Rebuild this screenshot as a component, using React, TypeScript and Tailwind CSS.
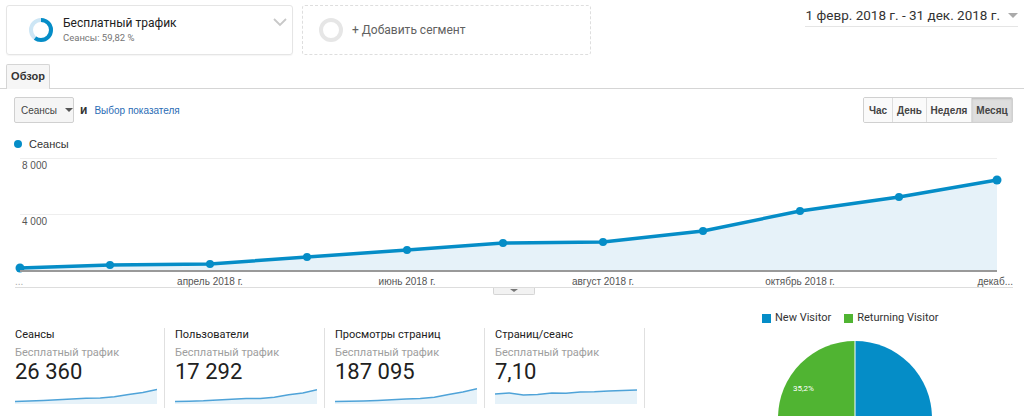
import React from 'react'

const pts: [number, number][] = [
  [20, 116], [110, 113], [210, 112], [307, 105], [407, 98], [503, 91],
  [603, 90], [703, 79], [800, 59], [899, 45], [997, 28],
]

const axisLabels = [
  { x: 210, t: 'апрель 2018 г.' },
  { x: 407, t: 'июнь 2018 г.' },
  { x: 603, t: 'август 2018 г.' },
  { x: 800, t: 'октябрь 2018 г.' },
]

function MainChart() {
  const line = pts.map(p => p.join(',')).join(' ')
  const area = `20,118 ${line} 997,118`
  return (
    <svg width="1024" height="136" className="block">
      <line x1="20" y1="6.5" x2="997" y2="6.5" stroke="#eeeeee" />
      <line x1="20" y1="62.5" x2="997" y2="62.5" stroke="#eeeeee" />
      <text x="22" y="17" fontSize="10" fill="#555" fontFamily="Liberation Sans, Arial, sans-serif">8 000</text>
      <text x="22" y="73" fontSize="10" fill="#555" fontFamily="Liberation Sans, Arial, sans-serif">4 000</text>
      <polygon points={area} fill="#e6f2f9" />
      <polyline points={line} fill="none" stroke="#058dc7" strokeWidth="3.5" strokeLinejoin="round" />
      {pts.map((p, i) => (
        <circle key={i} cx={p[0]} cy={p[1]} r={i === 0 || i === pts.length - 1 ? 4.5 : 4} fill="#058dc7" />
      ))}
      <line x1="20" y1="119" x2="997" y2="119" stroke="#999" strokeWidth="2" />
      <g fontSize="10" fill="#555" fontFamily="Liberation Sans, Arial, sans-serif">
        <text x="15" y="133" fill="#aaa">...</text>
        {axisLabels.map(l => (
          <text key={l.t} x={l.x} y="133" textAnchor="middle">{l.t}</text>
        ))}
        <text x="1013" y="133" textAnchor="end">декаб...</text>
      </g>
      <line x1="15" y1="135.5" x2="1013" y2="135.5" stroke="#dddddd" />
    </svg>
  )
}

function Spark({ d }: { d: number[] }) {
  const w = 142
  const h = 17
  const step = w / (d.length - 1)
  const line = d.map((v, i) => `${(i * step).toFixed(1)},${v}`).join(' ')
  return (
    <svg width={w} height={h} className="block mt-[4px]">
      <polygon points={`0,${h} ${line} ${w},${h}`} fill="#e6f2f9" />
      <polyline points={line} fill="none" stroke="#4fa3d8" strokeWidth="1.5" />
    </svg>
  )
}

const metrics = [
  { t: 'Сеансы', v: '26 360', d: [14.5, 14, 13.5, 12.8, 12, 11.2, 11, 9.8, 7.5, 5.5, 2.5] },
  { t: 'Пользователи', v: '17 292', d: [14.5, 14.2, 13.8, 13, 12.2, 11.6, 11.4, 10.3, 7.8, 6, 2.8] },
  { t: 'Просмотры страниц', v: '187 095', d: [14.5, 14.3, 14, 13.4, 12.7, 12, 11.4, 10.3, 7.5, 5, 1.8] },
  { t: 'Страниц/сеанс', v: '7,10', d: [7, 6, 8, 7.5, 6, 6.3, 5, 4.8, 4, 3.5, 3] },
]

function Donut() {
  const r = 10
  const c = 2 * Math.PI * r
  return (
    <svg width="26" height="26" viewBox="0 0 26 26">
      <circle cx="13" cy="13" r={r} fill="none" stroke="#cde6f5" strokeWidth="4" />
      <circle cx="13" cy="13" r={r} fill="none" stroke="#058dc7" strokeWidth="4"
        strokeDasharray={`${c * 0.5982} ${c}`} transform="rotate(-90 13 13)" />
    </svg>
  )
}

const arial = { fontFamily: 'Liberation Sans, Arial, sans-serif' }

export default function App() {
  return (
    <div className="w-[1024px] h-[416px] overflow-hidden bg-white text-[#222]" style={{ fontFamily: 'Roboto, sans-serif' }}>
      <div className="flex items-start pt-[5px] pl-[6px] h-[55px]">
        <div className="relative w-[287px] h-[50px] rounded-[3px] border border-[#e5e5e5] shadow-[0_1px_1px_rgba(0,0,0,0.04)] flex items-center pl-[21px]">
          <Donut />
          <div className="ml-[9px] leading-none">
            <div className="text-[12px] text-[#212121]">Бесплатный трафик</div>
            <div className="text-[9.5px] text-[#757575] mt-[4px]">Сеансы: 59,82 %</div>
          </div>
          <svg className="absolute right-[5px] top-[12px]" width="14" height="9" viewBox="0 0 14 9">
            <path d="M1 1 L7 7 L13 1" fill="none" stroke="#c8c8c8" strokeWidth="1.8" />
          </svg>
        </div>
        <div className="ml-[9px] w-[289px] h-[50px] rounded-[3px] border border-dashed border-[#dedede] flex items-center pl-[15px]">
          <svg width="26" height="26" viewBox="0 0 26 26">
            <circle cx="13" cy="13" r="10" fill="none" stroke="#e6e6e6" strokeWidth="4" />
          </svg>
          <span className="ml-[8px] text-[12px] text-[#616161]">+ Добавить сегмент</span>
        </div>
        <div className="ml-auto mr-[6px] flex items-center border-b border-[#e5e5e5] pl-[1px] pb-[1px]">
          <span className="text-[13.5px] text-[#333]">1 февр. 2018 г. - 31 дек. 2018 г.</span>
          <span className="ml-[8px] w-0 h-0 border-l-[5px] border-r-[5px] border-t-[5px] border-l-transparent border-r-transparent border-t-[#aaa]" />
        </div>
      </div>

      <div className="mt-[9px] h-[25px] border-b border-[#d5d5d5] pl-[6px] flex items-end" style={arial}>
        <div className="h-[25px] w-[44px] border border-b-0 border-[#d5d5d5] rounded-t-[2px] bg-[#f6f6f6] text-[11px] font-bold text-[#333] flex items-center justify-center -mb-px pb-px">Обзор</div>
      </div>

      <div className="mt-[8px] px-[14px] flex items-center h-[26px]" style={arial}>
        <div className="h-[26px] w-[60px] border border-[#d0d0d0] rounded-[2px] bg-[#f5f5f5] flex items-center pl-[6px] text-[10px] text-[#444]">
          Сеансы
          <span className="ml-[8px] w-0 h-0 border-l-[4px] border-r-[4px] border-t-[4px] border-l-transparent border-r-transparent border-t-[#555]" />
        </div>
        <span className="ml-[6px] text-[12px] font-bold text-[#333]">и</span>
        <span className="ml-[7px] text-[10px] text-[#2a6cb5]">Выбор показателя</span>
        <div className="ml-auto -mr-[3px] flex h-[26px] border border-[#d0d0d0] rounded-[2px] text-[10px] font-bold text-[#444] overflow-hidden">
          <div className="w-[29px] flex items-center justify-center bg-[#fafafa] border-r border-[#ddd]">Час</div>
          <div className="w-[34px] flex items-center justify-center bg-[#fafafa] border-r border-[#ddd]">День</div>
          <div className="w-[45px] flex items-center justify-center bg-[#fafafa] border-r border-[#ddd]">Неделя</div>
          <div className="w-[40px] flex items-center justify-center bg-[#dedede] shadow-[inset_0_1px_2px_rgba(0,0,0,0.15)]">Месяц</div>
        </div>
      </div>

      <div className="mt-[14px] pl-[14px] flex items-center h-[14px]" style={arial}>
        <span className="w-[8px] h-[8px] rounded-full bg-[#058dc7]" />
        <span className="ml-[7px] text-[11px] text-[#333]">Сеансы</span>
      </div>

      <div className="mt-[1px]">
        <MainChart />
        <div className="ml-[493px] w-[42px] h-[8px] -mt-px bg-[#f2f2f2] border border-[#d5d5d5] border-t-0 rounded-b-[2px] flex justify-center pt-[2px]">
          <span className="w-0 h-0 border-l-[4px] border-r-[4px] border-t-[3px] border-l-transparent border-r-transparent border-t-[#777]" />
        </div>
      </div>

      <div className="flex mt-[16px]">
        <div className="flex pl-[5px] mt-[17px]">
          {metrics.map(m => (
            <div key={m.t} className="w-[160px] h-[80px] pl-[10px] border-r border-[#e0e0e0]">
              <div className="text-[11px] text-[#212121] leading-none pt-[1px]">{m.t}</div>
              <div className="text-[11px] text-[#9e9e9e] leading-none mt-[7px]">Бесплатный трафик</div>
              <div className="text-[22px] text-[#212121] leading-none mt-[3px]">{m.v}</div>
              <Spark d={m.d} />
            </div>
          ))}
        </div>
        <div className="ml-[117px] flex flex-col items-start">
          <div className="flex items-center text-[11px] text-[#333] h-[14px]">
            <span className="w-[9px] h-[9px] bg-[#058dc7]" />
            <span className="ml-[4px]">New Visitor</span>
            <span className="ml-[13px] w-[9px] h-[9px] bg-[#50b432]" />
            <span className="ml-[4px]">Returning Visitor</span>
          </div>
          <svg width="160" height="80" className="mt-[13px] ml-[13px]">
            <path d="M80 80 L80 3 A77 77 0 0 1 157 80 Z" fill="#058dc7" />
            <path d="M80 80 L80 3 A77 77 0 0 0 3 80 Z" fill="#50b432" />
            <line x1="80" y1="3" x2="80" y2="80" stroke="#fff" strokeWidth="1" />
            <text x="18" y="53" fontSize="8" fill="#fff" fontFamily="Roboto, sans-serif">35,2%</text>
          </svg>
        </div>
      </div>
    </div>
  )
}
